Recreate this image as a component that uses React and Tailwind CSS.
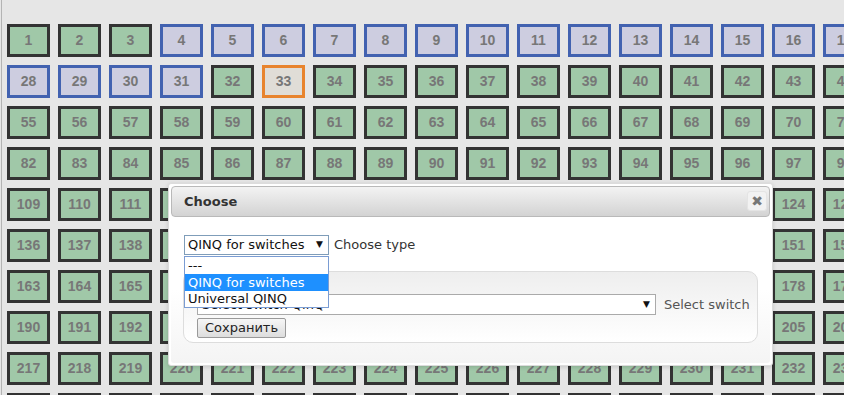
import React from "react";

function cellType(n) {
  if (n >= 4 && n <= 31) return "blue";
  if (n === 33) return "orange";
  return "green";
}

function Cell({ n }) {
  const t = cellType(n);
  const cls =
    t === "blue"
      ? "border-[#4262b0] bg-[#cdcde0]"
      : t === "orange"
      ? "border-[#e8842e] bg-[#e0ddd7]"
      : "border-[#333333] bg-[#a0c8a8]";
  return (
    <div
      className={
        "w-[43px] h-[33px] shrink-0 border-[3px] flex items-center justify-center text-[14px] font-bold text-[#777777] " +
        cls
      }
    >
      {n}
    </div>
  );
}

export default function App() {
  const rows = [];
  for (let r = 0; r < 10; r++) {
    const cells = [];
    for (let c = 0; c < 17; c++) cells.push(r * 27 + c + 1);
    rows.push(cells);
  }
  return (
    <div
      className="relative w-[844px] h-[395px] overflow-hidden bg-[#e6e6e6]"
      style={{ fontFamily: "'Liberation Sans', Arial, sans-serif" }}
    >
      <div className="absolute left-[1px] top-0 bottom-0 w-[1px] bg-[#b4b4b4]" />
      <div className="flex flex-col gap-[8px] pl-[7px] pt-[24px]">
        {rows.map((cells, i) => (
          <div key={i} className="flex gap-[8px]">
            {cells.map((n) => (
              <Cell key={n} n={n} />
            ))}
          </div>
        ))}
      </div>

      {/* Dialog */}
      <div
        className="absolute left-[168px] top-[183px] w-[605px] h-[183px] bg-white border border-[#dcdcdc] rounded-[3px] p-[2px] shadow-[0_1px_4px_rgba(0,0,0,0.15)] flex flex-col"
        style={{ fontFamily: "'DejaVu Sans', Verdana, sans-serif" }}
      >
        <div className="relative h-[31px] rounded-[4px] border border-[#b9b9b9] bg-gradient-to-b from-[#f3f3f3] to-[#d3d3d3] flex items-center pl-[12px]">
          <span className="text-[13px] font-bold text-[#333333]">Choose</span>
          <div className="absolute right-[2px] top-[4px] w-[20px] h-[20px] rounded-[3px] border border-[#e4e4e4] bg-[#f2f2f2] flex items-center justify-center text-[#777777] text-[14px] leading-none font-bold">
            ✖
          </div>
        </div>
        <div className="flex-1 bg-gradient-to-b from-white via-white to-[#f4f4f4] px-[13px] pt-[18px] rounded-b-[3px]">
          <div className="flex items-center gap-[5px] h-[20px]">
            <div className="w-[145px] h-[20px] border border-[#7f9db9] bg-white flex items-center justify-between pl-[3px] pr-[5px] text-[13px] text-[#111111]">
              <span>QINQ for switches</span>
              <span className="text-[9px]">▼</span>
            </div>
            <span className="text-[13px] text-[#333333]">Choose type</span>
          </div>
          <div className="mt-[16px] w-[575px] h-[72px] -ml-[1px] rounded-[10px] border border-[#dddddd] bg-gradient-to-b from-[#eeeeee] to-white pl-[13px] pt-[22px]">
            <div className="flex items-center gap-[8px]">
              <div className="w-[459px] h-[21px] border border-[#aaaaaa] bg-white flex items-center justify-between pl-[4px] pr-[5px] text-[13px] text-[#111111] overflow-hidden">
                <span>Select switch QinQ</span>
                <span className="text-[9px]">▼</span>
              </div>
              <span className="text-[13px] text-[#555555]">Select switch</span>
            </div>
            <button className="mt-[2px] w-[89px] h-[20px] border border-[#999999] rounded-[2px] bg-gradient-to-b from-[#f6f6f6] to-[#dddddd] text-[13px] text-[#222222] leading-none">
              Сохранить
            </button>
          </div>
        </div>
      </div>

      {/* Dropdown list */}
      <div
        className="absolute left-[184px] top-[256px] w-[145px] h-[52px] border border-[#7a9cd3] bg-white text-[13px] text-[#111111] flex flex-col"
        style={{ fontFamily: "'DejaVu Sans', Verdana, sans-serif" }}
      >
        <div className="h-[17px] leading-[17px] pl-[3px]">---</div>
        <div className="h-[17px] leading-[17px] pl-[3px] bg-[#1e90ff] text-white">QINQ for switches</div>
        <div className="h-[16px] leading-[16px] pl-[3px]">Universal QINQ</div>
      </div>
    </div>
  );
}
